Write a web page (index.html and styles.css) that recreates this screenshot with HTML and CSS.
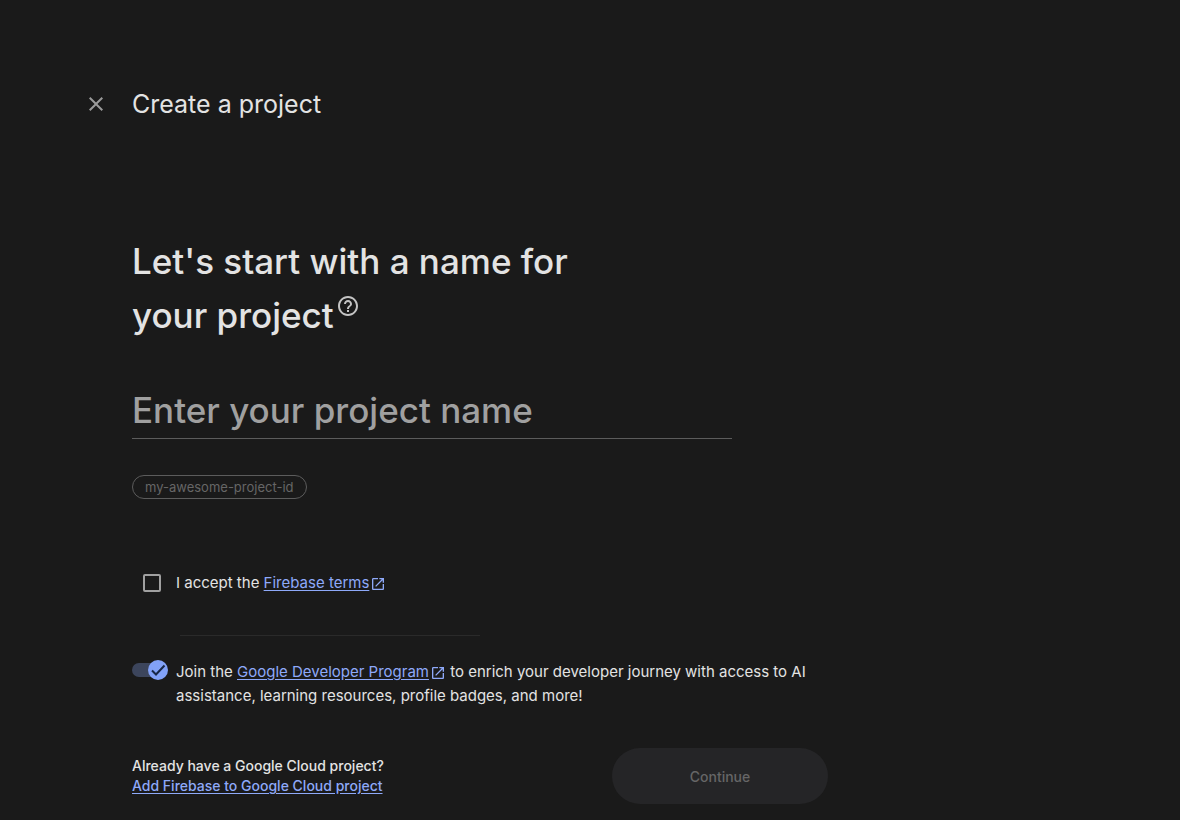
FILE: index.html
```html
<!DOCTYPE html>
<html lang="en">
<head>
<meta charset="utf-8">
<meta name="viewport" content="width=device-width, initial-scale=1">
<title>Create a project</title>
<link rel="stylesheet" href="styles.css">
</head>
<body>
<div class="page">
  <header class="topbar">
    <button class="icon-button" type="button" aria-label="Close">
      <svg class="close-icon" viewBox="0 0 24 24" aria-hidden="true"><path d="M19 6.41 17.59 5 12 10.59 6.41 5 5 6.41 10.59 12 5 17.59 6.41 19 12 13.41 17.59 19 19 17.59 13.41 12z"/></svg>
    </button>
    <h1 class="page-title">Create a project</h1>
  </header>
  <main>
    <form class="form">
      <h2 class="question"><label for="project-name">Let's start with a name for<br>your project</label><button class="help-button" type="button" aria-label="Help"><svg class="help-icon" viewBox="0 0 24 24" aria-hidden="true"><path d="M11 18h2v-2h-2v2zm1-16C6.48 2 2 6.48 2 12s4.48 10 10 10 10-4.48 10-10S17.52 2 12 2zm0 18c-4.41 0-8-3.59-8-8s3.59-8 8-8 8 3.59 8 8-3.59 8-8 8zm0-14c-2.21 0-4 1.79-4 4h2c0-1.1.9-2 2-2s2 .9 2 2c0 2-3 1.75-3 5h2c0-2.25 3-2.5 3-5 0-2.21-1.79-4-4-4z"/></svg></button></h2>
      <input class="name-input" id="project-name" type="text" placeholder="Enter your project name">
      <button class="id-chip" type="button" disabled>my-awesome-project-id</button>
      <div class="option terms">
        <span class="control"><input class="checkbox" id="terms" type="checkbox"></span>
        <p class="option-text"><label for="terms">I accept the</label> <a class="link" href="#terms">Firebase terms</a><svg class="launch-icon" viewBox="0 0 24 24" aria-hidden="true"><path d="M19 19H5V5h7V3H5c-1.11 0-2 .9-2 2v14c0 1.1.89 2 2 2h14c1.1 0 2-.9 2-2v-7h-2v7zM14 3v2h3.59l-9.83 9.83 1.41 1.41L19 6.41V10h2V3h-7z"/></svg></p>
      </div>
      <hr class="divider">
      <div class="option">
        <span class="switch">
          <input class="switch-input" id="join" type="checkbox" role="switch" checked>
          <svg class="switch-check" viewBox="0 0 20 20" aria-hidden="true"><path d="M4 10.5l4 4L16.500 5.500"/></svg>
        </span>
        <p class="option-text"><label for="join">Join the</label> <a class="link" href="#program">Google Developer Program</a><svg class="launch-icon" viewBox="0 0 24 24" aria-hidden="true"><path d="M19 19H5V5h7V3H5c-1.11 0-2 .9-2 2v14c0 1.1.89 2 2 2h14c1.1 0 2-.9 2-2v-7h-2v7zM14 3v2h3.59l-9.83 9.83 1.41 1.41L19 6.41V10h2V3h-7z"/></svg> to enrich your developer journey with access to AI assistance, learning resources, profile badges, and more!</p>
      </div>
      <footer class="actions">
        <p class="existing">Already have a Google Cloud project?<br><a class="link" href="#add">Add Firebase to Google Cloud project</a></p>
        <button class="continue" type="submit" disabled>Continue</button>
      </footer>
    </form>
  </main>
</div>
</body>
</html>
```
FILE: styles.css
```css
* {
  box-sizing: border-box;
}

body {
  margin: 0;
  background: #1a1a1a;
  color: #e3e3e3;
  font-family: Inter, "Liberation Sans", sans-serif;
  font-size: 15px;
  line-height: 24px;
}

h1, h2, p {
  margin: 0;
}

button, input {
  font-family: inherit;
}

.page {
  padding: 84px 76px 16px;
}

.topbar {
  display: flex;
  align-items: center;
  gap: 16px;
}

.icon-button {
  display: flex;
  align-items: center;
  justify-content: center;
  width: 40px;
  height: 40px;
  padding: 0;
  border: 0;
  background: none;
}

.close-icon {
  width: 24px;
  height: 24px;
  fill: #9a9a9a;
}

.page-title {
  font-size: 25px;
  line-height: 40px;
  font-weight: 400;
}

.form {
  display: flex;
  flex-direction: column;
  align-items: flex-start;
  max-width: 752px;
  padding: 110px 0 0 56px;
}

.question {
  font-size: 35px;
  line-height: 54px;
  font-weight: 500;
}

.help-button {
  padding: 0;
  border: 0;
  margin-left: 2px;
  background: none;
  line-height: 24px;
  vertical-align: 10px;
}

.help-icon {
  display: block;
  width: 24px;
  height: 24px;
  fill: #c4c4c4;
}

.name-input {
  width: 100%;
  max-width: 600px;
  height: 58px;
  margin-top: 39px;
  padding: 0;
  border: 0;
  border-bottom: 1px solid #5c5c5c;
  border-radius: 0;
  background: none;
  color: #e3e3e3;
  font-size: 35px;
  font-weight: 500;
}

.name-input::placeholder {
  color: #a0a0a0;
  opacity: 1;
}

.id-chip {
  height: 24px;
  margin-top: 36px;
  padding: 0 12px;
  border: 1px solid #5c5c5c;
  border-radius: 12px;
  background: none;
  color: #666666;
  font-size: 13px;
  line-height: 22px;
}

.option {
  display: flex;
  align-items: flex-start;
  gap: 8px;
}

.terms {
  margin-top: 72px;
}

.control {
  display: flex;
  justify-content: flex-end;
  width: 36px;
  padding: 3px 7px 0 0;
}

.checkbox {
  appearance: none;
  width: 18px;
  height: 18px;
  margin: 0;
  border: 2px solid #a0a0a0;
  border-radius: 2px;
}

.link {
  color: #8ea9f9;
  text-decoration: underline;
  text-underline-offset: 2px;
}

.launch-icon {
  width: 16px;
  height: 16px;
  margin-left: 1px;
  fill: #8ea9f9;
  vertical-align: -4px;
}

.divider {
  width: 100%;
  max-width: 300px;
  margin: 40px 0 24px 48px;
  border: 0;
  border-top: 1px solid #2a2a2a;
}

.switch {
  display: flex;
  position: relative;
  align-items: center;
  flex: none;
  width: 36px;
  height: 20px;
}

.switch-input {
  appearance: none;
  width: 34px;
  height: 14px;
  margin: 0;
  border-radius: 7px;
  background: #3c455c;
}

.switch-check {
  position: absolute;
  top: 0;
  right: 0;
  width: 20px;
  height: 20px;
  border-radius: 50%;
  background: #82a2f8;
  fill: none;
  stroke: #182848;
  stroke-width: 2;
  pointer-events: none;
}

.actions {
  display: flex;
  align-items: center;
  justify-content: space-between;
  width: 100%;
  margin-top: 40px;
}

.existing {
  font-size: 14px;
  line-height: 20px;
  font-weight: 500;
}

.continue {
  width: 216px;
  height: 56px;
  border: 0;
  border-radius: 28px;
  background: #252527;
  color: #666666;
  font-size: 14px;
  font-weight: 500;
}
```
